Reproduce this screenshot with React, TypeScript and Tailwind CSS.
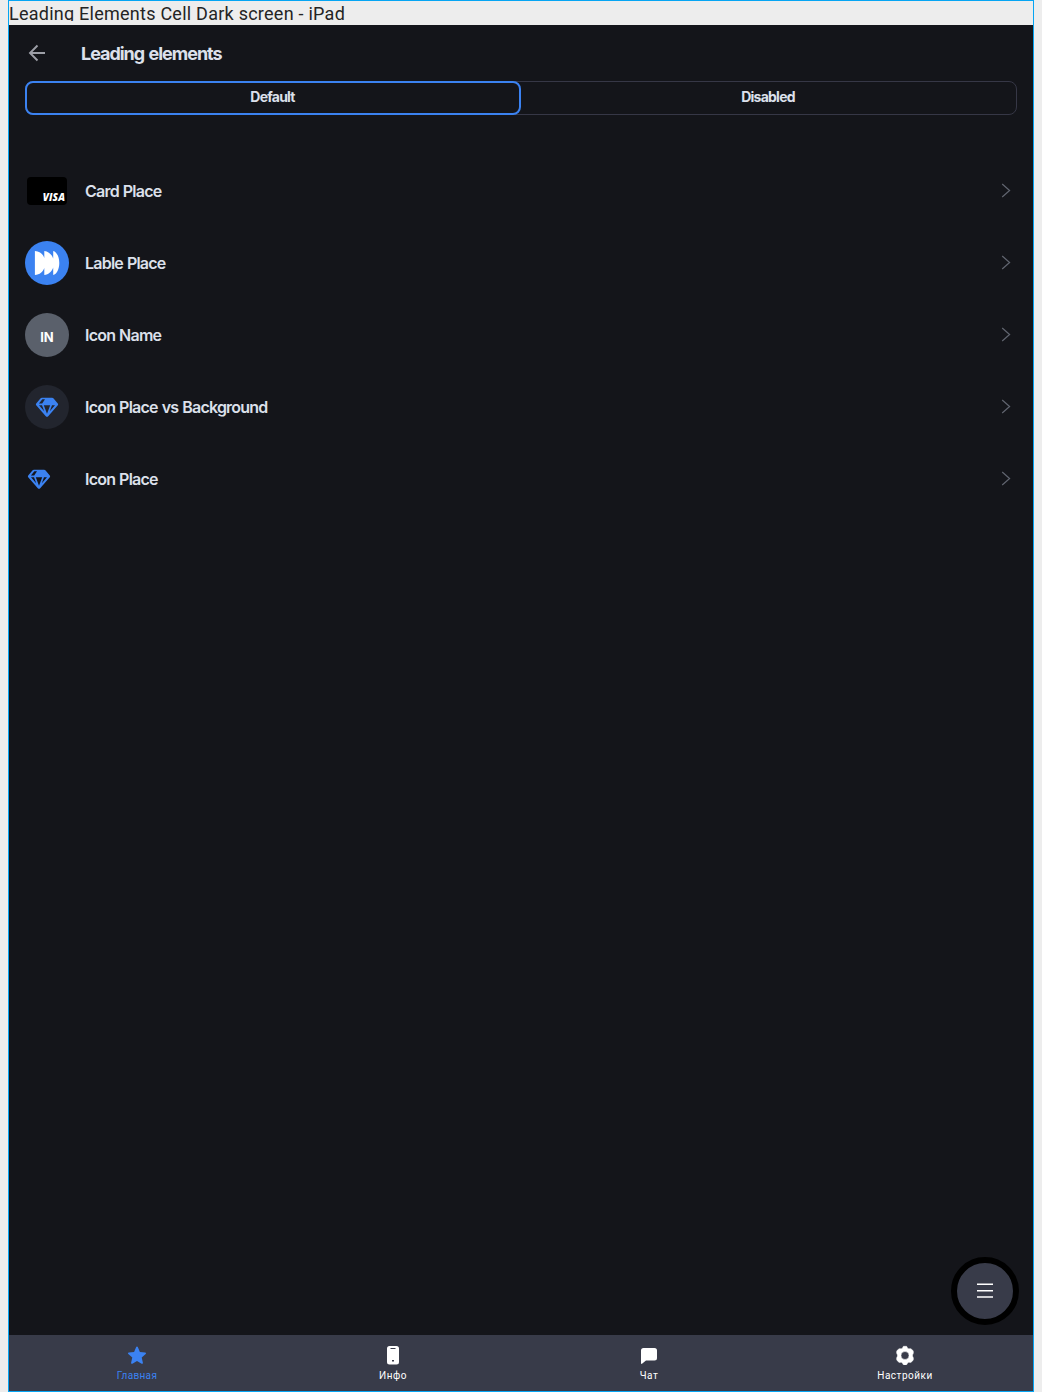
import type { ReactNode } from "react";

function Diamond() {
  return (
    <svg width="24" height="24" viewBox="0 0 24 24" fill="none" className="text-[#3b82f1]">
      <path
        fill="currentColor"
        fillRule="evenodd"
        d="M6.900 2.700h10.200c.6 0 1.100.2 1.500.7l4.200 5c.5.6.5 1.300 0 1.900l-9.600 10.900c-.7.8-1.700.8-2.400 0L1.200 10.300c-.5-.6-.5-1.300 0-1.900l4.200-5c.4-.5.9-.7 1.500-.7ZM7.400 4.300 3.900 8.500h3.300l2.800-4.200H7.400ZM4 10.200l5.200 6.100L7 10.200H4Zm4.800 0 3.200 8.600 3.200-8.600H8.800Zm8.200 0-2.200 6.100 5.200-6.100h-3Z"
      />
    </svg>
  );
}

function Wordmark() {
  return (
    <svg width="44" height="44" viewBox="0 0 44 44" fill="white">
      <path d="M9.900 10C14.700 10.300 18.200 13.300 19.300 17V10C23.700 10.500 26.900 13.500 28.200 17.500V10C31.700 10.800 34.300 16 34.300 22S31.700 33.200 28.200 34V26.500C26.900 30.500 23.700 33.500 19.300 34V27C18.200 30.700 14.700 33.700 9.900 34Z" />
    </svg>
  );
}

function Row({ label, children }: { label: string; children: ReactNode }) {
  return (
    <li className="flex h-[72px] items-center pl-4 pr-[22px]">
      <div className="flex size-11 items-center justify-center">{children}</div>
      <span className="ml-4 grow text-base font-semibold tracking-[-0.78px] [word-spacing:0.7px]">{label}</span>
      <svg width="10" height="16" viewBox="0 0 10 16" fill="none" stroke="#616570" strokeWidth="1.200" className="-mt-0.5">
        <path d="m1.200 2 7.400 6.500-7.400 6.500" />
      </svg>
    </li>
  );
}

function Tab({ label, active, children }: { label: string; active?: boolean; children: ReactNode }) {
  return (
    <a className={`flex flex-1 flex-col items-center pt-[10px] ${active ? "text-[#3b82f1]" : "text-white"}`}>
      <svg width="20" height="20" viewBox="0 0 20 20" fill="currentColor">{children}</svg>
      <span className={`mt-1 font-[Roboto,sans-serif] text-[10px] leading-[14px] ${active ? "tracking-[0.35px]" : "tracking-[0.5px]"}`}>{label}</span>
    </a>
  );
}

export default function App() {
  return (
    <div className="h-[1392px] w-[1042px] bg-[#ededed] px-2">
      <div className="flex h-full flex-col border border-[#06a5f3] font-[Inter,sans-serif] text-[#dce0eb]">
        <div className="h-6 shrink-0">
          <h1 className="h-5 overflow-hidden whitespace-nowrap font-[Roboto,sans-serif] text-[18px] leading-[26px] tracking-[0.25px] text-[#242424]">
            Leading Elements Cell Dark screen - iPad
          </h1>
        </div>
        <main className="relative flex grow flex-col bg-[#14151a]">
          <header className="flex h-14 items-center pl-4">
            <svg width="24" height="24" viewBox="0 0 24 24" fill="none" stroke="#9d9fa7" strokeWidth="1.900">
              <path d="M20 12H5.500M12.500 4.500 5 12l7.500 7.500" />
            </svg>
            <h2 className="ml-8 mt-px text-[18px] font-[650] tracking-[-1.03px] [word-spacing:1.2px]">Leading elements</h2>
          </header>
          <div className="mx-4 flex h-[34px] rounded-lg border border-[#363746] text-[14px] font-[650] tracking-[-0.75px]">
            <button className="-my-px -ml-px flex w-[496px] items-center justify-center rounded-lg border-2 border-[#3b82f1] pb-[3px] pr-px">Default</button>
            <button className="flex grow items-center justify-center pb-[3px] pr-px">Disabled</button>
          </div>
          <ul className="mt-10">
            <Row label="Card Place">
              <div className="flex h-7 w-10 items-end justify-end rounded bg-black pb-[3px] pr-0.5">
                <span className="font-['Open_Sans',sans-serif] text-[10px] font-extrabold italic leading-[10px] tracking-[0.1px] text-white">VISA</span>
              </div>
            </Row>
            <Row label="Lable Place">
              <div className="size-11 rounded-full bg-[#3b82f1]"><Wordmark /></div>
            </Row>
            <Row label="Icon Name">
              <div className="flex size-11 items-center justify-center rounded-full bg-[#5a606b] pt-[5px] text-[13px] font-bold text-white">IN</div>
            </Row>
            <Row label="Icon Place vs Background">
              <div className="flex size-11 items-center justify-center rounded-full bg-[#22252e]"><Diamond /></div>
            </Row>
            <Row label="Icon Place">
              <div className="mr-4"><Diamond /></div>
            </Row>
          </ul>
          <button className="absolute bottom-[10px] right-[14px] flex size-[68px] items-center justify-center rounded-full border-[6px] border-black bg-[#383b49]">
            <svg width="16" height="16" viewBox="0 0 16 16" stroke="white" strokeWidth="1.500">
              <path d="M0 1.200h16M0 7.700h16M0 14.100h16" />
            </svg>
          </button>
        </main>
        <nav className="flex h-14 shrink-0 bg-[#383b49]">
          <Tab label="Главная" active>
            <path d="M9.200 1.900c.3-.7 1.300-.7 1.600 0l2.100 5 5.300.5c.8.1 1.100 1 .5 1.500l-4 3.600 1.200 5.300c.2.8-.6 1.300-1.300.9L10 15.900l-4.600 2.800c-.7.4-1.500-.1-1.300-.9l1.200-5.300-4-3.600c-.6-.5-.3-1.400.5-1.500l5.300-.5Z" />
          </Tab>
          <Tab label="Инфо">
            <path fillRule="evenodd" d="M6.500 1h7A2.500 2.500 0 0 1 16 3.500V17a2.500 2.500 0 0 1-2.500 2.500h-7A2.500 2.500 0 0 1 4 17V3.500A2.500 2.500 0 0 1 6.500 1ZM7.500 3v1h5V3h-5Zm1.500 12v1.600h2V15H9Z" />
          </Tab>
          <Tab label="Чат">
            <path d="M4.500 3h11A2.500 2.500 0 0 1 18 5.500V13a2.500 2.500 0 0 1-2.500 2.500H7l-4 3.300c-.5.3-1 .1-1-.5V5.500A2.500 2.500 0 0 1 4.500 3Z" />
          </Tab>
          <Tab label="Настройки">
            <path transform="translate(0 .5)" fillRule="evenodd" d="M8.400.8h3.200l1 1.900 1.100.6 2.200-.1 2.300 2.100.2 2.200-.9 2v1.100l.9 2-.2 2.100-2.300 2.200-2.200-.1-1.100.6-1 1.900-1.600.3-1.600-.3-1-1.900-1.100-.6-2.200.1-2.300-2.200-.2-2.100.9-2V9.500l-.9-2 .2-2.200 2.300-2.100 2.200.1 1.100-.6ZM10 6a4 4 0 1 0 0 8 4 4 0 0 0 0-8Z" stroke="currentColor" strokeWidth=".5" strokeLinejoin="round" />
          </Tab>
        </nav>
      </div>
    </div>
  );
}
